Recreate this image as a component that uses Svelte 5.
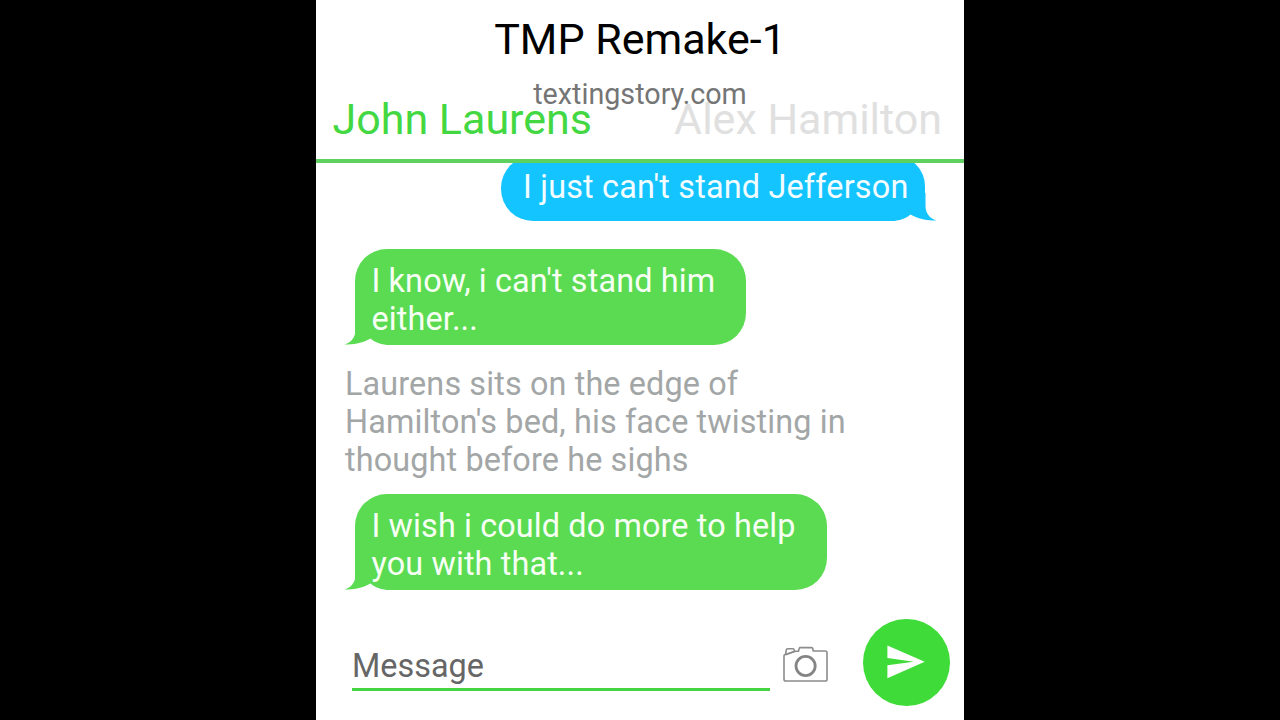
<script>
  const messages = [
    { kind: 'sent', lines: ["I just can't stand Jefferson"] },
    { kind: 'received', width: 391, lines: ["I know, i can't stand him", 'either...'] },
    {
      kind: 'narration',
      lines: [
        'Laurens sits on the edge of',
        "Hamilton's bed, his face twisting in",
        'thought before he sighs',
      ],
    },
    { kind: 'received', width: 472, lines: ['I wish i could do more to help', 'you with that...'] },
  ];
</script>

<main class="stage">
  <section class="phone">
    <header>
      <h1>TMP Remake-1</h1>
      <p class="site">textingstory.com</p>
      <nav>
        <span class="active">John Laurens</span>
        <span class="other">Alex Hamilton</span>
      </nav>
    </header>

    <div class="thread">
      {#each messages as m}
        <div class="msg {m.kind}" style:width={m.width ? `${m.width}px` : null}>
          {#if m.kind !== 'narration'}
            <svg class="tail" width="42" height="28" viewBox="0 0 42 28">
              <path class="gap" d="M0 28.5V27L20 20.5H27L42 27.6V28.5Z" />
              <path class="ink" d="M11.5 0V13C11.5 21 6 26.5 0.5 27.3C10 28.2 19 25.5 26.5 21.5C30 24.5 35 27 42 27.8V0Z" />
            </svg>
          {/if}
          {#each m.lines as text}
            <div class="line">{text}</div>
          {/each}
        </div>
      {/each}
    </div>

    <footer>
      <div class="field">Message</div>
      <svg class="camera" width="46" height="38" viewBox="0 0 46 38" fill="none" stroke="#8c8c8c" stroke-width="1.6" stroke-linejoin="round">
        <path d="M3 8.5L12 5.3H15.5L16.2 2.4Q16.4 1.6 17.4 1.6H28.6Q29.6 1.6 29.7 2.5L30.2 5H42.2Q44 5 44 6.8V33.2Q44 35 42.2 35H2.8Q1 35 1 33.2V9.6Q1 8.7 3 8.5Z" />
        <path d="M2.5 8.5L3.3 3.8Q3.5 2.8 4.5 2.8H10Q11 2.8 11.2 3.8L11.5 5.4" />
        <path d="M3 8.5L12 5.3" />
        <circle cx="22.6" cy="20" r="9.6" stroke-width="2.8" stroke="#858585" />
      </svg>
      <div class="send">
        <svg width="38" height="34" viewBox="0 0 38 34"><path fill="#fff" d="M0.4 0.4L37.7 16.7L0.4 33.2V20.3L26.8 16.7L0.4 13.1Z" /></svg>
      </div>
    </footer>
  </section>
</main>

<style>
  :global(body) { margin: 0; background: #000; }
  .stage { display: flex; justify-content: center; height: 720px; background: #000; font-family: Roboto, sans-serif; overflow: hidden; }
  .phone { width: 648px; height: 720px; background: #fff; display: flex; flex-direction: column; overflow: hidden; }
  header { box-sizing: border-box; height: 163px; flex: none; padding-top: 14px; border-bottom: 4px solid #5ed161; display: flex; flex-direction: column; background: #fff; position: relative; z-index: 1; }
  h1 { margin: 0; font-weight: 400; font-size: 43px; line-height: 50px; text-align: center; color: #000; }
  .site { margin: 13px 0 0; font-size: 28.7px; line-height: 34px; text-align: center; color: #757575; position: relative; z-index: 1; }
  nav { margin-top: -17px; padding: 0 22px 0 16.5px; display: flex; justify-content: space-between; font-size: 43px; line-height: 50px; }
  .active { color: #43d842; }
  .other { color: #e0e0e0; }
  .thread { height: 437px; flex: none; display: flex; flex-direction: column; align-items: flex-start; font-size: 32.4px; line-height: 38px; letter-spacing: 0.12px; overflow: hidden; }
  .msg { position: relative; box-sizing: border-box; flex: none; white-space: nowrap; }
  .line { position: relative; }
  .sent { align-self: flex-end; margin: -7px 39px 0 0; width: 424px; height: 64.5px; padding: 12px 0 0 22px; background: #14c4ff; color: #f2fcff; border-radius: 32px 30px 0 32px; letter-spacing: 0.18px; }
  .received { margin: 28.5px 0 0 39px; height: 96px; padding: 12.5px 0 0 16.5px; background: #5adb52; color: #f7fff5; border-radius: 32px 32px 32px 0; }
  .narration { margin: 20px 0 0 29px; color: #a3a6a6; }
  .narration + .received { margin-top: 15px; }
  .tail { position: absolute; bottom: 0; left: -11.5px; display: block; }
  .sent .tail { left: auto; right: -11.5px; transform: scaleX(-1); }
  .gap { fill: #fff; }
  .received .ink { fill: #5adb52; }
  .sent .ink { fill: #14c4ff; }
  footer { flex: 1; display: flex; align-items: flex-start; padding: 19px 14.5px 0 36px; }
  .field { box-sizing: border-box; width: 417.5px; height: 44px; margin-top: 28px; border-bottom: 3px solid #46d442; color: #666; font-size: 32.4px; line-height: 38px; }
  .camera { margin: 26.5px 0 0 13.5px; }
  .send { width: 86.5px; height: 86.5px; margin-left: auto; border-radius: 50%; background: #3fdc39; display: flex; align-items: center; justify-content: center; }
</style>
